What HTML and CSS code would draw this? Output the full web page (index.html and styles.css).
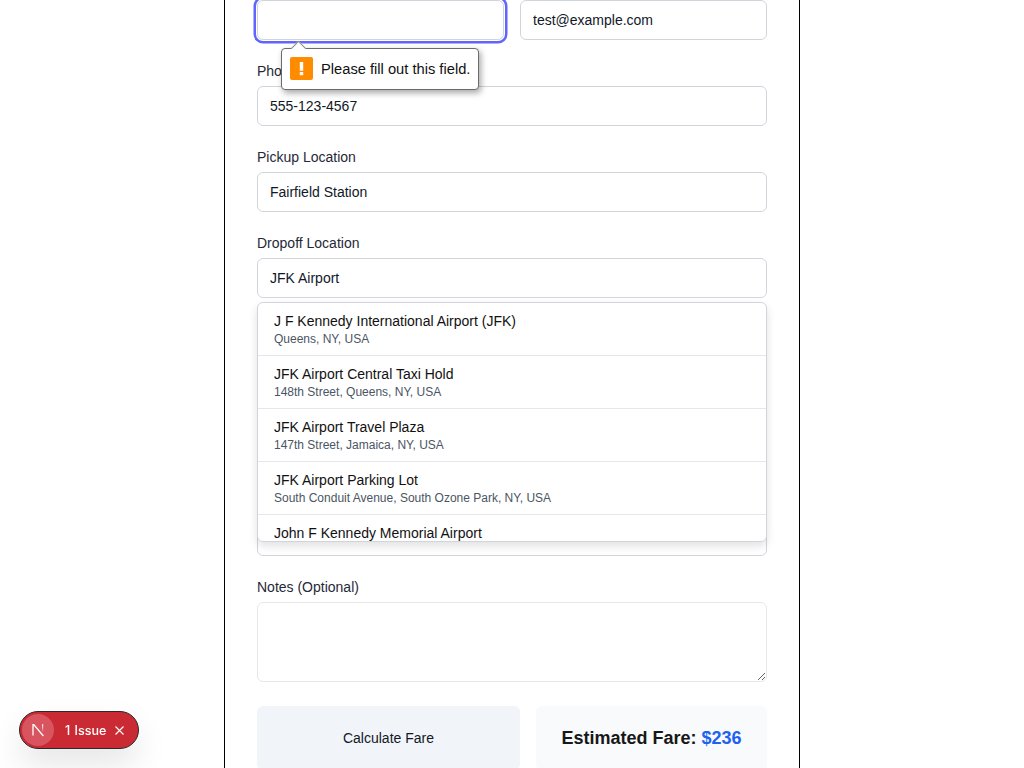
FILE: index.html
```html
<!DOCTYPE html>
<html lang="en">
<head>
  <meta charset="UTF-8">
  <meta name="viewport" content="width=device-width, initial-scale=1.0">
  <title>Book a Ride</title>
  <link rel="stylesheet" href="styles.css">
</head>
<body>
  <main class="booking-page">
    <form class="booking-form">
      <div class="form-row">
        <div class="field">
          <input class="text-input is-focused" type="text" aria-label="Name">
          <div class="validation-bubble">
            <span class="bubble-arrow"></span>
            <svg class="bubble-icon" width="23" height="23" viewBox="0 0 23 23" aria-hidden="true">
              <rect width="23" height="23" rx="2" fill="#ff8c00"/>
              <rect x="9.8" y="5" width="3.4" height="8.8" fill="#fff"/>
              <rect x="9.8" y="15" width="3.4" height="3.2" fill="#fff"/>
            </svg>
            <span>Please fill out this field.</span>
          </div>
        </div>
        <div class="field">
          <input class="text-input" type="email" value="test@example.com" aria-label="Email">
        </div>
      </div>

      <div class="field">
        <label class="field-label" for="phone">Phone</label>
        <input class="text-input" id="phone" type="text" value="555-123-4567">
      </div>

      <div class="field">
        <label class="field-label" for="pickup">Pickup Location</label>
        <input class="text-input" id="pickup" type="text" value="Fairfield Station">
      </div>

      <div class="field">
        <label class="field-label" for="dropoff">Dropoff Location</label>
        <input class="text-input" id="dropoff" type="text" value="JFK Airport">
        <ul class="suggestions">
          <li class="suggestion">
            <div class="suggestion-name">J F Kennedy International Airport (JFK)</div>
            <div class="suggestion-address">Queens, NY, USA</div>
          </li>
          <li class="suggestion">
            <div class="suggestion-name">JFK Airport Central Taxi Hold</div>
            <div class="suggestion-address">148th Street, Queens, NY, USA</div>
          </li>
          <li class="suggestion">
            <div class="suggestion-name">JFK Airport Travel Plaza</div>
            <div class="suggestion-address">147th Street, Jamaica, NY, USA</div>
          </li>
          <li class="suggestion">
            <div class="suggestion-name">JFK Airport Parking Lot</div>
            <div class="suggestion-address">South Conduit Avenue, South Ozone Park, NY, USA</div>
          </li>
          <li class="suggestion">
            <div class="suggestion-name">John F Kennedy Memorial Airport</div>
          </li>
        </ul>
      </div>

      <!-- these rows sit behind the open suggestion list -->
      <div class="field">
        <span class="field-label"></span>
        <input class="text-input" type="text" aria-label="Date">
      </div>
      <div class="field">
        <span class="field-label"></span>
        <input class="text-input" type="text" aria-label="Time">
      </div>
      <div class="field">
        <span class="field-label"></span>
        <input class="text-input" type="text" aria-label="Passengers">
      </div>

      <div class="field">
        <label class="field-label" for="notes">Notes (Optional)</label>
        <textarea class="notes-input" id="notes"></textarea>
      </div>

      <div class="fare-row">
        <button class="calc-button" type="button">Calculate Fare</button>
        <div class="fare-box">Estimated Fare: <span class="fare-amount">$236</span></div>
      </div>
    </form>
  </main>

  <div class="issue-badge">
    <span class="issue-logo">
      <svg width="14" height="14" viewBox="0 0 14 14" aria-hidden="true">
        <defs>
          <linearGradient id="stemFade" x1="0" y1="0" x2="0" y2="1">
            <stop offset="0" stop-color="#fff"/>
            <stop offset="1" stop-color="#fff" stop-opacity="0"/>
          </linearGradient>
        </defs>
        <path d="M2 12.6 V1.6 H2.8 L12.4 13" stroke="#fff" stroke-width="1.3" fill="none"/>
        <rect x="11" y="1.2" width="1.2" height="8" fill="url(#stemFade)"/>
      </svg>
    </span>
    <span class="issue-count">1 Issue</span>
    <svg class="issue-close" width="9" height="9" viewBox="0 0 9 9" aria-hidden="true">
      <path d="M0.5 0.5 L8.5 8.5 M8.5 0.5 L0.5 8.5" stroke="#fff" stroke-width="1.1" fill="none"/>
    </svg>
  </div>
</body>
</html>
```

FILE: styles.css
```css
* {
  box-sizing: border-box;
}

html, body {
  height: 100%;
  margin: 0;
  overflow: hidden;
  background: #fff;
}

body {
  font-family: "Liberation Sans", Arial, sans-serif;
  color: #111827;
}

.booking-page {
  width: 576px;
  min-height: 100%;
  margin: 0 auto;
  padding: 0 32px;
  border-left: 1px solid #000;
  border-right: 1px solid #000;
}

.booking-form {
  display: flex;
  flex-direction: column;
  gap: 20px;
}

.form-row {
  display: grid;
  grid-template-columns: 1fr 1fr;
  gap: 16px;
}

.field {
  position: relative;
}

.field-label {
  display: block;
  height: 22px;
  margin-bottom: 4px;
  font-size: 14px;
  line-height: 22px;
  color: #1f2937;
}

.text-input {
  display: block;
  width: 100%;
  height: 40px;
  padding: 0 12px;
  border: 1px solid #d1d5db;
  border-radius: 6px;
  background: #fff;
  font-family: "Liberation Sans", Arial, sans-serif;
  font-size: 14px;
  color: #111827;
}

.is-focused {
  box-shadow: 0 0 0 1px #fff, 0 0 0 3.5px #6065fb;
}

.validation-bubble {
  position: absolute;
  top: 48px;
  left: 24px;
  z-index: 5;
  display: flex;
  align-items: center;
  gap: 8px;
  width: 198px;
  height: 42px;
  padding: 0 8px 1px;
  border: 1px solid #6b6b6b;
  border-radius: 4px;
  background: #fff;
  box-shadow: 2px 3px 6px rgba(0, 0, 0, 0.35);
  font-size: 14.7px;
  color: #111;
  white-space: nowrap;
}

.bubble-arrow {
  position: absolute;
  top: -6px;
  left: 11px;
  width: 11px;
  height: 11px;
  border-top: 1px solid #8a8a8a;
  border-left: 1px solid #8a8a8a;
  background: #fff;
  transform: rotate(45deg);
}

.bubble-icon {
  flex: none;
}

.suggestions {
  position: absolute;
  top: 70px;
  left: 0;
  right: 0;
  z-index: 3;
  height: 240px;
  margin: 0;
  padding: 0;
  overflow: hidden;
  list-style: none;
  border: 1px solid #d1d5db;
  border-radius: 6px;
  background: #fff;
  box-shadow: 0 4px 10px rgba(0, 0, 0, 0.12);
}

.suggestion {
  padding: 8px 16px;
  border-bottom: 1px solid #e5e7eb;
}

.suggestion-name {
  font-size: 14px;
  line-height: 20px;
  color: #111;
}

.suggestion-address {
  font-size: 12px;
  line-height: 16px;
  color: #4b5563;
}

.notes-input {
  display: block;
  width: 100%;
  height: 80px;
  padding: 8px 12px;
  border: 1px solid #e5e7eb;
  border-radius: 6px;
  font-family: "Liberation Sans", Arial, sans-serif;
  font-size: 14px;
}

.fare-row {
  display: flex;
  gap: 16px;
  margin-top: 4px;
}

.calc-button {
  flex: none;
  width: 263px;
  height: 64px;
  border: 0;
  border-radius: 6px;
  background: #f1f5f9;
  font-family: "Liberation Sans", Arial, sans-serif;
  font-size: 14px;
  color: #111827;
}

.fare-box {
  flex: 1;
  height: 64px;
  border-radius: 6px;
  background: #f8fafc;
  font-size: 18px;
  font-weight: bold;
  line-height: 64px;
  text-align: center;
  color: #171717;
}

.fare-amount {
  color: #1d63f0;
}

.issue-badge {
  position: fixed;
  left: 19px;
  bottom: 19px;
  display: flex;
  align-items: center;
  width: 120px;
  height: 38px;
  padding: 0 2px;
  border: 1px solid #2a2a2a;
  border-radius: 19px;
  background: #c92a33;
  box-shadow: 0 16px 32px rgba(0, 0, 0, 0.1);
  font-family: Inter, sans-serif;
  color: #fff;
}

.issue-logo {
  display: flex;
  align-items: center;
  justify-content: center;
  flex: none;
  width: 32px;
  height: 32px;
  border-radius: 50%;
  background: #d85560;
}

.issue-count {
  margin-left: 11px;
  font-size: 12.5px;
  font-weight: 500;
  word-spacing: 1px;
}

.issue-close {
  margin-left: 9px;
}
```
